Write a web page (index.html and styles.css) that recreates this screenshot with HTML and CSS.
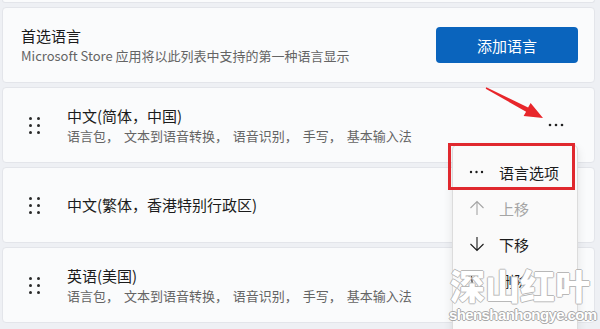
FILE: index.html
```html
<!DOCTYPE html>
<html lang="zh-CN">
<head>
<meta charset="utf-8">
<link rel="stylesheet" href="styles.css">
</head>
<body>
<div class="page">
  <div class="stub"></div>
  <div class="card card-head">
    <div class="text">
      <div class="title">首选语言</div>
      <div class="sub">Microsoft Store 应用将以此列表中支持的第一种语言显示</div>
    </div>
    <button class="btn">添加语言</button>
  </div>
  <div class="card lang">
    <span class="handle"><i></i><i></i><i></i><i></i><i></i><i></i></span>
    <div class="text">
      <div class="title">中文(简体，中国)</div>
      <div class="sub spaced">语言包， 文本到语音转换， 语音识别， 手写， 基本输入法</div>
    </div>
    <svg class="more" width="16" height="4" viewBox="0 0 16 4"><circle cx="2" cy="2" r="1.3"/><circle cx="8" cy="2" r="1.3"/><circle cx="14" cy="2" r="1.3"/></svg>
  </div>
  <div class="card lang">
    <span class="handle"><i></i><i></i><i></i><i></i><i></i><i></i></span>
    <div class="text">
      <div class="title">中文(繁体，香港特别行政区)</div>
    </div>
    <svg class="more" width="16" height="4" viewBox="0 0 16 4"><circle cx="2" cy="2" r="1.3"/><circle cx="8" cy="2" r="1.3"/><circle cx="14" cy="2" r="1.3"/></svg>
  </div>
  <div class="card lang">
    <span class="handle"><i></i><i></i><i></i><i></i><i></i><i></i></span>
    <div class="text">
      <div class="title">英语(美国)</div>
      <div class="sub spaced">语言包， 文本到语音转换， 语音识别， 手写， 基本输入法</div>
    </div>
    <svg class="more" width="16" height="4" viewBox="0 0 16 4"><circle cx="2" cy="2" r="1.3"/><circle cx="8" cy="2" r="1.3"/><circle cx="14" cy="2" r="1.3"/></svg>
  </div>
</div>

<div class="menu">
  <div class="mi"><span class="ic"><svg width="15" height="4" viewBox="0 0 15 4"><circle cx="2" cy="2" r="1.2"/><circle cx="7.5" cy="2" r="1.2"/><circle cx="13" cy="2" r="1.2"/></svg></span><span>语言选项</span></div>
  <div class="mi disabled"><span class="ic"><svg width="16" height="16" viewBox="0 0 16 16"><path d="M8 15V1.5M1.5 8L8 1.5L14.5 8" fill="none" stroke="currentColor" stroke-width="1.1"/></svg></span><span>上移</span></div>
  <div class="mi"><span class="ic"><svg width="16" height="16" viewBox="0 0 16 16"><path d="M8 1V14.5M1.5 8L8 14.5L14.5 8" fill="none" stroke="currentColor" stroke-width="1.1"/></svg></span><span>下移</span></div>
  <div class="mi"><span class="ic"><svg width="14" height="16" viewBox="0 0 14 16"><path d="M1 3.5H13M5 3.5V1.5H9V3.5M2.5 3.5L3.5 15H10.5L11.5 3.5" fill="none" stroke="currentColor" stroke-width="1.1"/></svg></span><span>删除</span></div>
</div>
<div class="redbox"></div>
<svg class="arrow" width="600" height="329" viewBox="0 0 600 329"><polygon points="486.3,87.2 528.1,107.5 530.6,103.1 543,118 523.6,116.1 526.1,111.7 485.7,88.8" fill="#e8262b"/></svg>
<div class="wm">
  <div class="wm-cn">深山红叶</div>
  <div class="wm-en">shenshanhongye.com</div>
</div>
</body>
</html>
```
FILE: styles.css
```css
* { box-sizing: border-box; }
html, body { margin: 0; padding: 0; }
body {
  width: 600px;
  height: 329px;
  overflow: hidden;
  background: #eef0f4;
  font-family: "Noto Sans CJK SC", "Noto Sans", sans-serif;
  color: #1b1b1b;
  position: relative;
}
.page {
  padding: 0 5px 0 2px;
  display: flex;
  flex-direction: column;
  gap: 4px;
}
.stub {
  height: 3px;
  background: #fafbfc;
  border: 1px solid #e3e5ea;
  border-top: none;
  border-radius: 0 0 4px 4px;
}
.card {
  height: 76px;
  background: #fafbfc;
  border: 1px solid #e3e5ea;
  border-radius: 4px;
  display: flex;
  align-items: center;
}
.card-head {
  padding: 0 16px 0 18px;
  justify-content: space-between;
}
.text { display: flex; flex-direction: column; }
.title { font-size: 15px; line-height: 20px; color: #1b1b1b; }
.sub { font-size: 13px; line-height: 19px; color: #646464; white-space: pre; }
.sub.spaced { word-spacing: 2px; }
.btn {
  width: 142px;
  height: 36px;
  border: none;
  border-radius: 4px;
  background: #0a64bd;
  color: #fff;
  font-family: inherit;
  font-size: 15px;
  padding: 0;
}
.lang { padding: 0 30px 0 26px; }
.lang .text { flex: 1; }
.handle {
  width: 11px;
  display: grid;
  grid-template-columns: 3px 3px;
  column-gap: 5px;
  row-gap: 4px;
  margin-right: 27px;
  margin-top: 1px;
}
.handle i { width: 3px; height: 3px; border-radius: 50%; background: #2a2a2a; display: block; }
.more { fill: #222; }

.menu {
  position: absolute;
  left: 452px;
  top: 144px;
  width: 126px;
  height: 200px;
  background: #fafafa;
  border: 1px solid #dcdcdc;
  border-radius: 6px;
  box-shadow: 0 4px 10px rgba(0,0,0,0.10);
  padding-top: 9px;
}
.mi {
  height: 36px;
  display: flex;
  align-items: center;
  font-size: 15px;
  color: #1b1b1b;
}
.mi .ic {
  width: 46px;
  padding-left: 16px;
  display: flex;
  align-items: center;
  fill: #1b1b1b;
}
.mi.disabled { color: #a5a5a5; }
.redbox {
  position: absolute;
  left: 448px;
  top: 143px;
  width: 127px;
  height: 47px;
  border: 3px solid #e0282e;
}
.arrow { position: absolute; left: 0; top: 0; pointer-events: none; }
.wm {
  position: absolute;
  left: 449px;
  top: 263px;
  width: 142px;
  text-align: center;
  color: #fff;
}
.wm-cn {
  font-size: 35px;
  line-height: 44px;
  font-weight: 900;
  letter-spacing: 0;
  text-shadow: 1px 0 0 #b8b8b8, -1px 0 0 #b8b8b8, 0 1px 0 #b8b8b8, 0 -1px 0 #b8b8b8;
}
.wm-en {
  font-family: "Liberation Sans", Arial, sans-serif;
  font-weight: 700;
  font-size: 15px;
  line-height: 16px;
  letter-spacing: -0.6px;
  text-shadow: 1px 0 0 #a8a8a8, -1px 0 0 #a8a8a8, 0 1px 0 #a8a8a8, 0 -1px 0 #a8a8a8;
}
```
